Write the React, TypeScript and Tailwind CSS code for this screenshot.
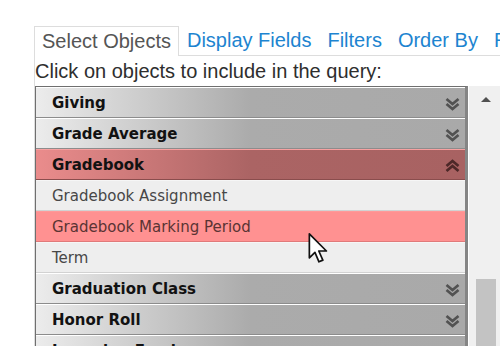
import React from "react";

type Row = {
  label: string;
  kind: "group" | "item";
  open?: boolean;
  active?: boolean;
};

const rows: Row[] = [
  { label: "Giving", kind: "group" },
  { label: "Grade Average", kind: "group" },
  { label: "Gradebook", kind: "group", open: true },
  { label: "Gradebook Assignment", kind: "item" },
  { label: "Gradebook Marking Period", kind: "item", active: true },
  { label: "Term", kind: "item" },
  { label: "Graduation Class", kind: "group" },
  { label: "Honor Roll", kind: "group" },
  { label: "Incoming Freshmen", kind: "group" },
];

const tabs = ["Display Fields", "Filters", "Order By", "Results"];

// double chevron drawn as two stacked Vs
function Chevron({ up, color }: { up?: boolean; color: string }) {
  return (
    <svg width="15" height="14" viewBox="0 0 15 14" className="mr-[5px] mt-[2px] shrink-0">
      <g fill="none" stroke={color} strokeWidth="2.7" strokeLinejoin="miter">
        {up ? (
          <>
            <polyline points="1.5,7 7.5,2 13.5,7" />
            <polyline points="1.5,12 7.5,7 13.5,12" />
          </>
        ) : (
          <>
            <polyline points="1.5,2 7.5,7 13.5,2" />
            <polyline points="1.5,7 7.5,12 13.5,7" />
          </>
        )}
      </g>
    </svg>
  );
}

function ListRow({ row }: { row: Row }) {
  if (row.kind === "group") {
    const red = row.open;
    return (
      <div
        className={`h-[31px] flex items-center justify-between pl-[16px] pt-[1px] border-t border-b ${
          red
            ? "bg-[linear-gradient(90deg,#ea8c8c_0%,#ab6464_50%,#a86262_100%)] border-t-[#f7a0a0] border-b-[#8a4d4d]"
            : "bg-[linear-gradient(90deg,#ececec_0%,#ababab_50%,#a9a9a9_100%)] border-t-white border-b-[#8c8c8c]"
        }`}
      >
        <span className="font-['DejaVu_Sans',sans-serif] font-bold text-[15px] text-[#121212]">
          {row.label}
        </span>
        <Chevron up={red} color={red ? "#4d2828" : "#525252"} />
      </div>
    );
  }
  return (
    <div
      className={`h-[31px] flex items-center pl-[16px] pt-[1px] border-t border-b ${
        row.active
          ? "bg-[#ff9191] border-t-[#ff9999] border-b-[#e07a7a] text-[#5a3434]"
          : "bg-[#eeeeee] border-t-[#f6f6f6] border-b-[#d2d2d2] text-[#474747]"
      }`}
    >
      <span className="font-['DejaVu_Sans',sans-serif] text-[15px]">{row.label}</span>
    </div>
  );
}

export default function App() {
  return (
    <div className="w-[500px] h-[346px] overflow-hidden bg-white relative font-['Liberation_Sans',Arial,sans-serif]">
      <div className="pt-[26px] pl-[34px]">
        {/* tab strip */}
        <div className="flex items-end border-b border-[#dddddd] h-[30px]">
          <div className="h-[30px] mb-[-1px] border border-b-0 border-[#dddddd] bg-white px-[7px] text-[20px] leading-[28px] text-[#555555] whitespace-nowrap">
            Select Objects
          </div>
          {tabs.map((t) => (
            <div
              key={t}
              className="h-[29px] px-[8px] text-[20px] leading-[28px] text-[#1d84d0] whitespace-nowrap"
            >
              {t}
            </div>
          ))}
        </div>

        {/* panel */}
        <div className="border-l border-[#dddddd]">
          <div className="text-[20px] leading-[30px] text-[#2e2e2e] whitespace-nowrap">
            Click on objects to include in the query:
          </div>
          <div className="flex h-[300px]">
            <div className="w-[433px] border-t border-l border-[#6f6f6f] border-r-[3px] border-r-[#858585] overflow-hidden">
              {rows.map((r) => (
                <ListRow key={r.label} row={r} />
              ))}
            </div>
            <div className="flex-1 ml-[1px] bg-[#f0f0f0] pt-[11px]">
              <div className="ml-[12px] w-0 h-0 border-l-[5px] border-r-[5px] border-b-[5px] border-l-transparent border-r-transparent border-b-[#505050]" />
              <div className="ml-[7px] mt-[177px] w-[20px] h-[80px] bg-[#c3c3c3]" />
            </div>
          </div>
        </div>
      </div>

      {/* mouse pointer */}
      <svg
        width="21"
        height="31"
        viewBox="0 0 13 20"
        className="absolute left-[308px] top-[233px]"
      >
        <path
          d="M0.6,0.6 L0.6,16 L4.2,12.5 L6.8,18.6 L9.3,17.5 L6.7,11.6 L11.6,11.6 Z"
          fill="white"
          stroke="#111"
          strokeWidth="1.1"
          strokeLinejoin="round"
        />
      </svg>
    </div>
  );
}
